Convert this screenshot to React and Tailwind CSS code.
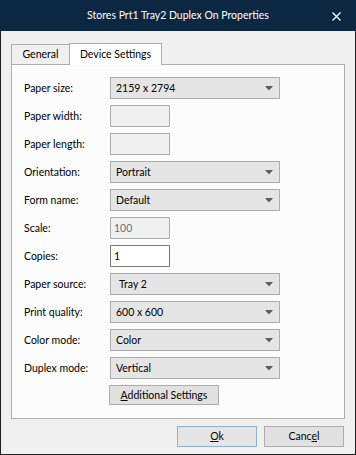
import React from "react";

const font = { fontFamily: 'Lato, "Noto Sans", "Liberation Sans", sans-serif' };

function Arrow() {
  return (
    <svg width="8" height="5" viewBox="0 0 8 5" className="shrink-0">
      <path d="M0 0 H8 L4 4.5 Z" fill="#5f5f5f" />
    </svg>
  );
}

function Combo({ value, extraPad }) {
  return (
    <div className="w-[170px] h-[22px] border border-[#acacac] bg-[#e5e5e5] flex items-center justify-between pr-[6px]">
      <span className={extraPad ? "pl-[8px]" : "pl-[5px]"}>{value}</span>
      <Arrow />
    </div>
  );
}

function TextBox({ value, white, disabled }) {
  return (
    <div
      className={`w-[60px] h-[22px] border flex items-center pl-[3px] ${
        white ? "bg-white border-[#7a7a7a]" : "bg-[#f0f0f0] border-[#acacac]"
      } ${disabled ? "text-[#6d6d6d]" : ""}`}
    >
      {value}
    </div>
  );
}

function Row({ label, children }) {
  return (
    <div className="flex items-center h-[22px]">
      <div className="w-[86px] shrink-0">{label}</div>
      {children}
    </div>
  );
}

export default function App() {
  return (
    <div
      style={font}
      className="w-[356px] h-[455px] bg-[#f0f0f0] border-l border-r border-b border-[#1f1f1f] flex flex-col text-[10.5px] text-black leading-none"
    >
      <div className="h-[31px] shrink-0 bg-[#0c2742] -mx-px flex items-center relative text-white">
        <div className="w-full text-center text-[10.5px]">Stores Prt1 Tray2 Duplex On Properties</div>
        <svg className="absolute right-[15px] top-[12px]" width="9" height="9" viewBox="0 0 9 9">
          <path d="M0.5 0.5 L8.5 8.5 M8.5 0.5 L0.5 8.5" stroke="#fff" strokeWidth="1.3" />
        </svg>
      </div>

      <div className="pl-[10px] pr-[10px] pt-[11px] flex flex-col">
        <div className="flex items-end h-[22px]">
          <div className="h-[20px] w-[59px] border border-b-0 border-[#adadad] bg-[#f0f0f0] flex items-center justify-center">
            General
          </div>
          <div className="h-[22px] w-[93px] -ml-px border border-b-0 border-[#adadad] bg-white flex items-center justify-center relative z-10 mb-[-1px] pb-px">
            Device Settings
          </div>
        </div>
        <div className="h-[355px] border border-[#adadad] bg-[#fcfcfc] pl-[12px] pt-[12px] flex flex-col gap-[6px]">
          <Row label="Paper size:"><Combo value="2159 x 2794" /></Row>
          <Row label="Paper width:"><TextBox value="" /></Row>
          <Row label="Paper length:"><TextBox value="" /></Row>
          <Row label="Orientation:"><Combo value="Portrait" /></Row>
          <Row label="Form name:"><Combo value="Default" /></Row>
          <Row label="Scale:"><TextBox value="100" disabled /></Row>
          <Row label="Copies:"><TextBox value="1" white /></Row>
          <Row label="Paper source:"><Combo value="Tray 2" extraPad /></Row>
          <Row label="Print quality:"><Combo value="600 x 600" /></Row>
          <Row label="Color mode:"><Combo value="Color" /></Row>
          <Row label="Duplex mode:"><Combo value="Vertical" /></Row>
          <div className="pl-[85px]">
            <div className="w-[110px] h-[20px] border border-[#adadad] bg-[#e1e1e1] flex items-center justify-center">
              <span><u>A</u>dditional Settings</span>
            </div>
          </div>
        </div>
        <div className="flex justify-end gap-[7px] pt-[7px] pr-px">
          <div className="w-[80px] h-[21px] border border-[#8fb0d0] bg-[#e5e5e5] flex items-center justify-center">
            <span><u>O</u>k</span>
          </div>
          <div className="w-[80px] h-[21px] border border-[#adadad] bg-[#e1e1e1] flex items-center justify-center">
            <span>Canc<u>e</u>l</span>
          </div>
        </div>
      </div>
    </div>
  );
}
